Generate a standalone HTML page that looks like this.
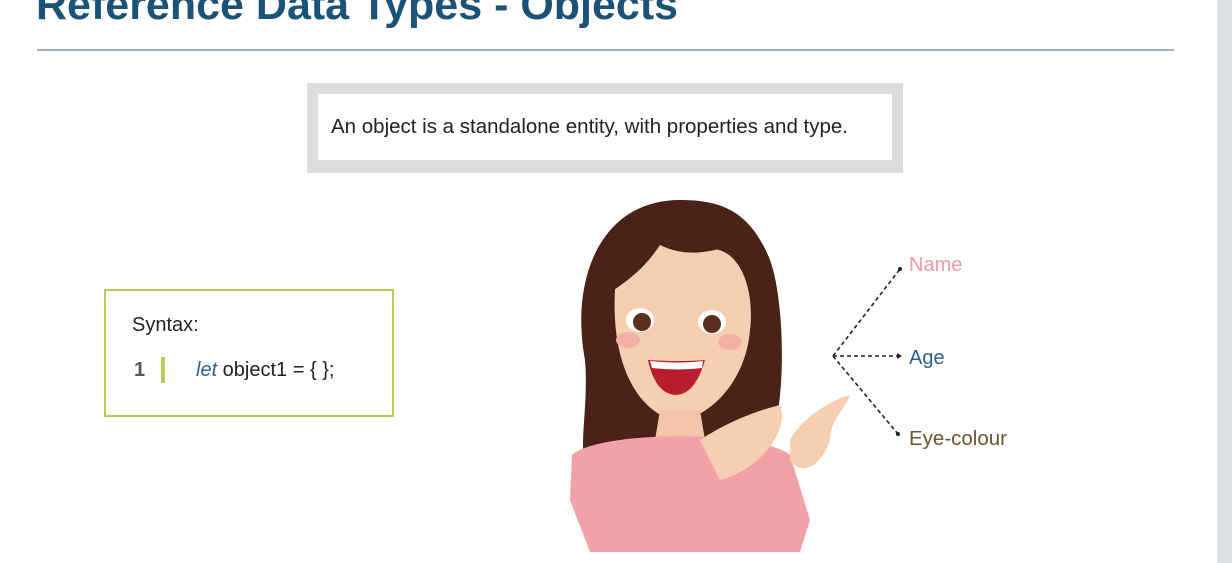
<!DOCTYPE html>
<html><head><style>
body{margin:0;width:1232px;height:563px;background:#fff;position:relative;overflow:hidden;font-family:"Liberation Sans","DejaVu Sans",sans-serif}
.t{position:absolute;left:36px;top:-19px;font-size:43px;font-weight:bold;color:#1b5278;white-space:nowrap}
.hr{position:absolute;left:37px;top:49px;width:1137px;height:2px;background:#9fb0c0}
.side{position:absolute;left:1217px;top:0;width:15px;height:563px;background:#dde1e4}
.def{position:absolute;left:307px;top:83px;width:596px;height:90px;background:#ddd}
.def div{position:absolute;left:11px;top:11px;width:574px;height:66px;background:#fff;font-size:20.5px;color:#222;line-height:66px;text-indent:13px;white-space:nowrap}
.syn{position:absolute;left:104px;top:289px;width:286px;height:124px;border:2px solid #b5cc5a;background:#fff}
.l{position:absolute;font-size:20px}
</style></head><body>
<div class="t">Reference Data Types - Objects</div>
<div class="hr"></div>
<div class="side"></div>
<div class="def"><div>An object is a standalone entity, with properties and type.</div></div>
<div class="syn">
<div class="l" style="left:26px;top:23px;color:#222">Syntax:</div>
<div class="l" style="left:28px;top:68px;color:#555;font-weight:bold">1</div>
<div style="position:absolute;left:55px;top:66px;width:4px;height:26px;background:#b5cc5a"></div>
<div class="l" style="left:90px;top:68px;color:#222"><i style="color:#2a5f8f">let</i> object1 = { };</div>
</div>
<svg style="position:absolute;left:0;top:0" width="1232" height="563">
<path d="M680 200 C600 200 570 280 585 360 C590 420 570 470 600 480 L760 470 C790 420 785 300 770 260 C750 210 720 200 680 200Z" fill="#4a2318"/>
<path d="M615 290 C615 240 660 240 700 250 C740 240 755 290 750 330 C745 390 700 420 680 420 C650 420 610 380 615 290Z" fill="#f6cfb3"/>
<path d="M600 250 C630 220 700 215 745 240 C720 250 690 260 660 245 C640 275 620 285 600 300Z" fill="#4a2318"/>
<ellipse cx="640" cy="320" rx="14" ry="12" fill="#fff"/><circle cx="642" cy="322" r="9" fill="#5a3020"/>
<ellipse cx="712" cy="322" rx="14" ry="12" fill="#fff"/><circle cx="712" cy="324" r="9" fill="#5a3020"/>
<ellipse cx="628" cy="340" rx="12" ry="8" fill="#f5b0a5"/><ellipse cx="730" cy="342" rx="12" ry="8" fill="#f5b0a5"/>
<path d="M648 360 Q680 362 705 360 Q695 395 675 395 Q655 393 648 360Z" fill="#b81d2d"/>
<path d="M650 361 Q680 364 703 361 L702 368 Q678 371 652 368Z" fill="#fff"/>
<path d="M660 410 L700 410 L705 440 L655 440Z" fill="#f2c4a8"/>
<path d="M572 455 C600 430 760 430 790 455 L810 520 L800 552 L590 552 L570 500Z" fill="#f2a1a6"/>
<path d="M700 440 C730 420 760 410 780 405 C790 430 760 470 720 480Z" fill="#f6cfb3"/>
<path d="M790 440 C800 420 830 400 850 395 C845 410 830 420 830 440 C820 470 800 475 790 460Z" fill="#f6cfb3"/>
<g stroke="#222" stroke-width="1.6" stroke-dasharray="4 3" fill="none">
<path d="M833 356 L900 269"/><path d="M833 356 L897 356"/><path d="M833 356 L898 434"/></g>
<g fill="#222"><circle cx="900" cy="269" r="2"/><path d="M897 353 L902 356 L897 359Z"/><circle cx="898" cy="434" r="2"/></g>
<text x="909" y="271" font-size="20" fill="#ef9aa4" font-family="Liberation Sans">Name</text>
<text x="909" y="364" font-size="20" fill="#2a5f8f" font-family="Liberation Sans">Age</text>
<text x="909" y="445" font-size="20.5" fill="#6b5430" font-family="Liberation Sans">Eye-colour</text>
</svg>
</body></html>
